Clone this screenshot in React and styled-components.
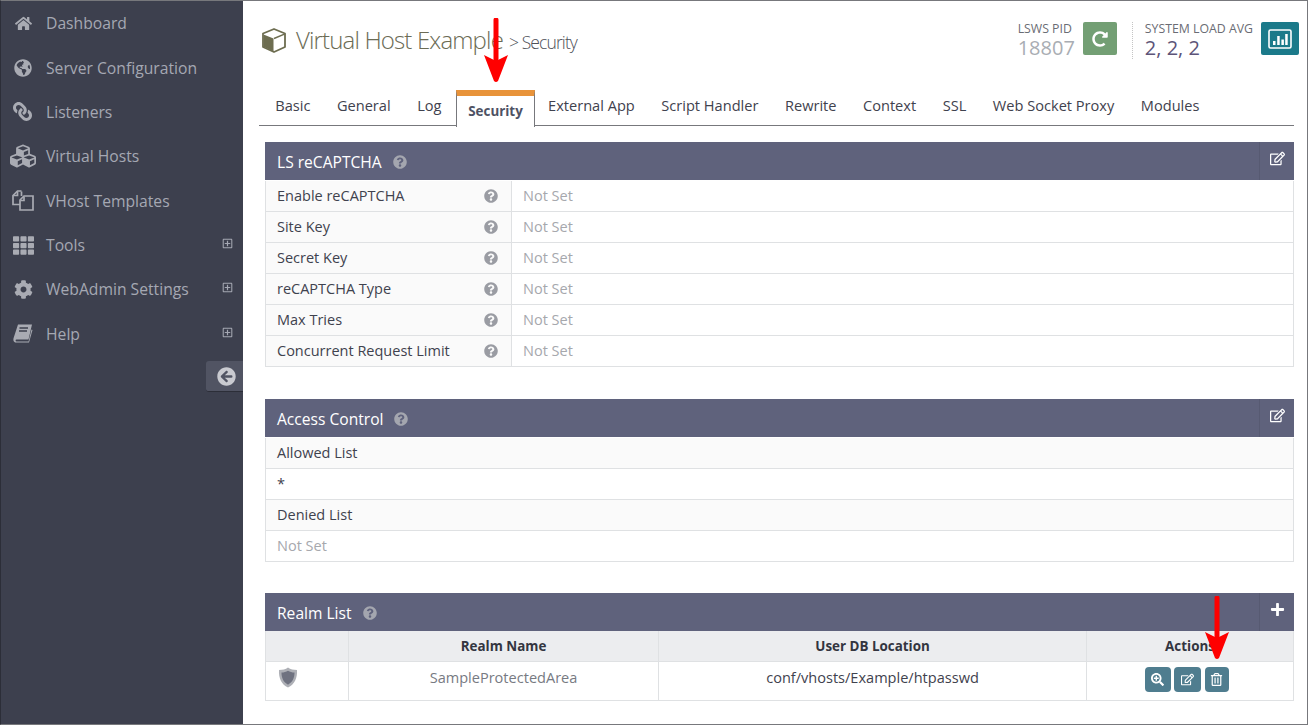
import React from 'react';
import styled, { createGlobalStyle } from 'styled-components';
import {
  FaHome, FaGlobeAmericas, FaLink, FaCubes, FaTh, FaCog,
  FaArrowCircleLeft, FaQuestionCircle, FaRedoAlt,
  FaRegEdit, FaPlus, FaSearchPlus, FaRegTrashAlt, FaRegPlusSquare,
} from 'react-icons/fa';

const GlobalStyle = createGlobalStyle`
  html, body { margin: 0; padding: 0; background: #fff; }
  body { font-family: "Open Sans", "Liberation Sans", sans-serif; overflow: hidden; }
  * { box-sizing: border-box; }
`;

const Page = styled.div`
  position: relative;
  display: flex;
  width: 1308px;
  height: 725px;
  overflow: hidden;
  border: 1px solid #77787c;
  border-left-color: #2c2e38;
`;

const Sidebar = styled.nav`
  width: 242px;
  flex: none;
  background: #3d404e;
`;

const NavItem = styled.div`
  position: relative;
  display: flex;
  align-items: center;
  height: 44.38px;
  color: #a5a8b3;
  font-size: 15.7px;
`;

const NavIcon = styled.span`
  width: 44px;
  margin-right: 1px;
  flex: none;
  display: flex;
  justify-content: center;
  font-size: ${p => p.$size}px;
  color: #a9abb3;
  ${p => p.$flip && 'transform: scaleX(-1);'}
`;

const NavExpand = styled.span`
  position: absolute;
  right: 10px;
  top: 14px;
  font-size: 11px;
  color: #a5a8b3;
`;

const Collapse = styled.div`
  display: flex;
  justify-content: flex-end;
  margin-top: 5px;
`;

const CollapseButton = styled.div`
  width: 37px;
  height: 31px;
  background: #515463;
  border-bottom: 1px solid #2c2e38;
  border-radius: 3px 0 0 3px;
  color: #c9cad0;
  font-size: 19px;
  display: flex;
  align-items: center;
  padding-left: 11px;
`;

const Main = styled.main`
  flex: 1;
  min-width: 0;
  padding-left: 16px;
  padding-right: 13px;
`;

const TopBar = styled.header`
  display: flex;
  justify-content: space-between;
  height: 88px;
`;

const Title = styled.h1`
  margin: 0;
  padding: 22px 0 0 3px;
  display: flex;
  align-items: baseline;
  font-weight: 300;
  font-size: 24px;
  letter-spacing: -0.85px;
  color: #6b6b55;
`;

const TitleIcon = styled.svg`
  align-self: flex-start;
  margin: 5px 10px 0 0;
  flex: none;
`;

const TitleSub = styled.small`
  font-size: 17.5px;
  letter-spacing: -0.9px;
  color: #4e5058;
  margin-left: 6px;
  font-weight: 300;
`;

const Stats = styled.div`
  display: flex;
  padding-top: 21px;
  margin-right: -5px;
`;

const Stat = styled.div`
  display: flex;
  align-items: flex-start;
  gap: 8px;
  height: 37px;
  ${p => p.$divided && 'border-left: 1px dotted #c4c4c4; margin-left: 15px; padding-left: 12px;'}
`;

const StatText = styled.div`
  display: flex;
  flex-direction: column;
`;

const StatLabel = styled.span`
  font-size: 12.3px;
  line-height: 14px;
  color: #6a6c74;
`;

const StatValue = styled.span`
  font-size: 20px;
  line-height: 24px;
  color: ${p => p.$color};
`;

const StatButton = styled.div`
  width: ${p => p.$w}px;
  height: 33px;
  border-radius: 2px;
  background: ${p => p.$bg};
  color: #fff;
  font-size: 16px;
  display: flex;
  align-items: center;
  justify-content: center;
`;

const Tabs = styled.div`
  display: flex;
  height: 37px;
  border-bottom: 1px solid #77787c;
  padding-left: 3px;
`;

const Tab = styled.div`
  color: #3f424e;
  font-size: 14.6px;
  padding: 6px 13.25px 0;
  white-space: nowrap;
  ${p => p.$active && `
    position: relative;
    height: 37px;
    margin: 1px 0 0 1.5px;
    padding: 6px 11px 0;
    background: #fff;
    font-weight: 700;
    font-size: 13.4px;
    color: #4e5264;
    border: 1px solid #77787c;
    border-top: 6px solid #e8933a;
    border-bottom: none;
  `}
`;

const Panel = styled.section`
  margin: ${p => p.$mt}px 0 0 6px;
  width: 1029px;
`;

const PanelHeader = styled.div`
  display: flex;
  align-items: center;
  height: 38px;
  margin-bottom: 1px;
  background: #5f627c;
  color: #fff;
  font-size: 15.6px;
  padding-left: 12px;
`;

const PanelTitle = styled.span`
  flex: 1;
  display: flex;
  align-items: center;
  gap: 11px;
  padding-top: 2px;
`;

const PanelAction = styled.span`
  width: 35px;
  height: 100%;
  border-left: 1px solid #575a72;
  display: flex;
  align-items: center;
  justify-content: center;
  font-size: 15px;
  padding-bottom: 6px;
  color: #fff;
`;

const HelpDot = styled.span`
  display: inline-flex;
  font-size: 14px;
  color: ${p => p.$color || '#a4a6af'};
`;

const RowHelp = styled(HelpDot)`
  margin-top: 2px;
`;

const Row = styled.div`
  display: flex;
  height: 31px;
  border: 1px solid #dfe1e3;
  border-top: none;
  font-size: 14.5px;
  color: #3f424e;
`;

const KeyCell = styled.div`
  width: 246px;
  flex: none;
  display: flex;
  align-items: center;
  justify-content: space-between;
  padding: 0 13px 2px 11px;
  background: #fafafa;
  border-right: 1px solid #dfe1e3;
`;

const ValueCell = styled.div`
  flex: 1;
  display: flex;
  align-items: center;
  padding: 0 0 2px 11px;
  color: #a6a8ad;
`;

const ListCell = styled.div`
  flex: 1;
  display: flex;
  align-items: center;
  padding: 0 0 2px 11px;
  background: ${p => (p.$shade ? '#fafafa' : '#fff')};
  color: ${p => (p.$muted ? '#a6a8ad' : '#3f424e')};
`;

const Table = styled.div`
  display: grid;
  grid-template-columns: 84px 310px 428px 207px;
  margin-top: -1px;
`;

const HeadCell = styled.div`
  height: 31px;
  display: flex;
  align-items: center;
  justify-content: center;
  background: #ecedef;
  font-size: 13.4px;
  font-weight: 700;
  color: #33353f;
  border-right: 1px solid #dfe1e3;
  border-bottom: 1px solid #dfe1e3;
  ${p => p.$first && 'border-left: 1px solid #dfe1e3;'}
`;

const BodyCell = styled.div`
  height: 39px;
  display: flex;
  align-items: flex-start;
  justify-content: center;
  padding-top: 5px;
  font-size: 14.55px;
  color: ${p => p.$color || '#3f424e'};
  border-right: 1px solid #dfe1e3;
  border-bottom: 1px solid #dfe1e3;
`;

const ShieldCell = styled(BodyCell)`
  justify-content: flex-start;
  padding-left: 12px;
  border-left: 1px solid #dfe1e3;
`;

const ActionCell = styled(BodyCell)`
  padding-right: 7px;
`;

const Actions = styled.div`
  display: flex;
  gap: 3px;
`;

const ActionButton = styled.span`
  width: ${p => p.$w}px;
  height: 25px;
  margin-left: ${p => p.$ml || 0}px;
  border-radius: 4px;
  background: #4f7d8f;
  color: #fff;
  font-size: 13px;
  display: flex;
  align-items: center;
  justify-content: center;
`;

const Arrow = styled.svg`
  position: absolute;
  left: ${p => p.$x}px;
  top: ${p => p.$y}px;
`;

const FilesIcon = () => (
  <svg width="22" height="21" viewBox="0 0 22 21" fill="none" stroke="currentColor" strokeWidth="1.7">
    <path d="M9.5 1H5.5L1 5.5V14.5H8" />
    <path d="M5.5 1.5V5.5H1.5" />
    <path d="M9.5 1.5V6" />
    <path d="M15 6H12L8 10V20H21V6H15Z" />
    <path d="M12 6.5V10.5H8.5" />
  </svg>
);

const BookIcon = () => (
  <svg width="20" height="19" viewBox="0 0 20 19" fill="currentColor">
    <path d="M5 0.5H19L15.5 15.5H3.5C2.3 15.5 2.3 17.5 3.5 17.5H15.5L18.5 5.5L19.5 6L16 18.5H3C0.5 18.5 0 16 0.6 14L5 0.5Z" />
    <path d="M6.5 4H15M6 7H14" stroke="#3d404e" strokeWidth="1.4" />
  </svg>
);

const CubeIcon = () => (
  <TitleIcon width="24" height="25" viewBox="0 0 24 25">
    <path d="M12 1L23 5.5V19L12 24L1 19V5.5Z" fill="#fff" stroke="#6d6d50" strokeWidth="1.8" strokeLinejoin="round" />
    <path d="M1.5 6.5L11.5 10.5V23.5L1.5 18.7Z" fill="#6d6d50" />
    <path d="M12 10.5L23 5.8" stroke="#6d6d50" strokeWidth="1.4" />
  </TitleIcon>
);

const ChartIcon = () => (
  <svg width="24" height="20" viewBox="0 0 24 20">
    <rect x="1" y="1" width="22" height="18" rx="1.5" fill="none" stroke="#fff" strokeWidth="1.6" />
    <path d="M5 12h2.5v4H5zM9.2 7h2.5v9H9.2zM13.4 10.5h2.5V16h-2.5zM17.2 5h2.5v11h-2.5z" fill="#fff" />
  </svg>
);

const ShieldIcon = () => (
  <svg width="20" height="21" viewBox="0 0 20 21">
    <path d="M10 0.5C12.5 2.3 15.5 3 19 3C19.5 11 16.5 17.5 10 20.5C3.5 17.5 0.5 11 1 3C4.5 3 7.5 2.3 10 0.5Z" fill="#aeb0b6" />
    <path d="M10 3.8C12 5 14 5.5 16.5 5.6C16.6 11 14.5 15.3 10 17.7C5.5 15.3 3.4 11 3.5 5.6C6 5.5 8 5 10 3.8Z" fill="#6f7280" />
  </svg>
);

const nav = [
  ['Dashboard', FaHome, 17, false, false],
  ['Server Configuration', FaGlobeAmericas, 18, false, false],
  ['Listeners', FaLink, 19, false, true],
  ['Virtual Hosts', FaCubes, 26, false, false],
  ['VHost Templates', FilesIcon, 20, false, false],
  ['Tools', FaTh, 21, true, false],
  ['WebAdmin Settings', FaCog, 19, true, false],
  ['Help', BookIcon, 19, true, false],
];

const tabs = ['Basic', 'General', 'Log', 'Security', 'External App', 'Script Handler', 'Rewrite', 'Context', 'SSL', 'Web Socket Proxy', 'Modules'];

const recaptcha = ['Enable reCAPTCHA', 'Site Key', 'Secret Key', 'reCAPTCHA Type', 'Max Tries', 'Concurrent Request Limit'];

const RedArrow = ({ x, y, h }) => (
  <Arrow $x={x} $y={y} width="26" height={h} viewBox={`0 0 26 ${h}`}>
    <path d={`M13 2V${h - 20}`} stroke="#f00" strokeWidth="5" strokeLinecap="round" fill="none" />
    <path d={`M1 ${h - 28}L13 ${h - 22}L25 ${h - 28}L15 ${h - 2}Q13 ${h} 11 ${h - 2}Z`} fill="#f00" />
  </Arrow>
);

export default function App() {
  return (
    <Page>
      <GlobalStyle />
      <Sidebar>
        {nav.map(([label, Icon, size, expand, flip]) => (
          <NavItem key={label}>
            <NavIcon $size={size} $flip={flip}><Icon /></NavIcon>
            {label}
            {expand && <NavExpand><FaRegPlusSquare /></NavExpand>}
          </NavItem>
        ))}
        <Collapse>
          <CollapseButton><FaArrowCircleLeft /></CollapseButton>
        </Collapse>
      </Sidebar>

      <Main>
        <TopBar>
          <Title>
            <CubeIcon />
            Virtual Host Example
            <TitleSub>&gt; Security</TitleSub>
          </Title>
          <Stats>
            <Stat>
              <StatText>
                <StatLabel>LSWS PID</StatLabel>
                <StatValue $color="#a9adb3">18807</StatValue>
              </StatText>
              <StatButton $w={34} $bg="#739f74"><FaRedoAlt /></StatButton>
            </Stat>
            <Stat $divided>
              <StatText>
                <StatLabel>SYSTEM LOAD AVG</StatLabel>
                <StatValue $color="#5d5478">2, 2, 2</StatValue>
              </StatText>
              <StatButton $w={38} $bg="#1b7a8a"><ChartIcon /></StatButton>
            </Stat>
          </Stats>
        </TopBar>

        <Tabs>
          {tabs.map(t => <Tab key={t} $active={t === 'Security'}>{t}</Tab>)}
        </Tabs>

        <Panel $mt={16}>
          <PanelHeader>
            <PanelTitle>LS reCAPTCHA <HelpDot><FaQuestionCircle /></HelpDot></PanelTitle>
            <PanelAction><FaRegEdit /></PanelAction>
          </PanelHeader>
          {recaptcha.map(label => (
            <Row key={label}>
              <KeyCell>{label}<RowHelp $color="#9a9ca3"><FaQuestionCircle /></RowHelp></KeyCell>
              <ValueCell>Not Set</ValueCell>
            </Row>
          ))}
        </Panel>

        <Panel $mt={32}>
          <PanelHeader>
            <PanelTitle>Access Control <HelpDot><FaQuestionCircle /></HelpDot></PanelTitle>
            <PanelAction><FaRegEdit /></PanelAction>
          </PanelHeader>
          <Row><ListCell $shade>Allowed List</ListCell></Row>
          <Row><ListCell>*</ListCell></Row>
          <Row><ListCell $shade>Denied List</ListCell></Row>
          <Row><ListCell $muted>Not Set</ListCell></Row>
        </Panel>

        <Panel $mt={31}>
          <PanelHeader>
            <PanelTitle>Realm List <HelpDot><FaQuestionCircle /></HelpDot></PanelTitle>
            <PanelAction><FaPlus /></PanelAction>
          </PanelHeader>
          <Table>
            <HeadCell $first />
            <HeadCell>Realm Name</HeadCell>
            <HeadCell>User DB Location</HeadCell>
            <HeadCell>Actions</HeadCell>
            <ShieldCell><ShieldIcon /></ShieldCell>
            <BodyCell $color="#777a82">SampleProtectedArea</BodyCell>
            <BodyCell>conf/vhosts/Example/htpasswd</BodyCell>
            <ActionCell>
              <Actions>
                <ActionButton $w={26}><FaSearchPlus /></ActionButton>
                <ActionButton $w={27}><FaRegEdit /></ActionButton>
                <ActionButton $w={24} $ml={1}><FaRegTrashAlt /></ActionButton>
              </Actions>
            </ActionCell>
          </Table>
        </Panel>
      </Main>

      <RedArrow x={482} y={17} h={65} />
      <RedArrow x={1203} y={595} h={64} />
    </Page>
  );
}
